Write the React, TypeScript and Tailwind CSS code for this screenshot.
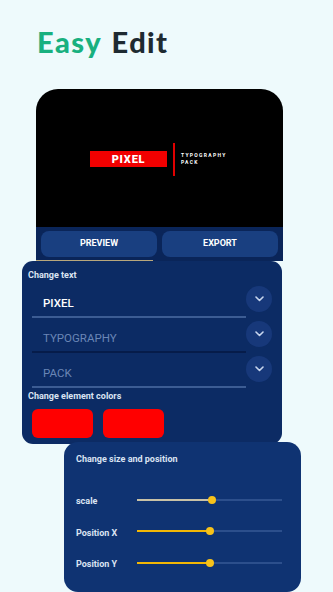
import React from 'react';

type TextRow = { value: string; active: boolean; line: string };

const rows: TextRow[] = [
  { value: 'PIXEL', active: true, line: 'bg-[#3c5c93]' },
  { value: 'TYPOGRAPHY', active: false, line: 'bg-[#061c4a]' },
  { value: 'PACK', active: false, line: 'bg-[#3c5c93]' },
];

const sliders = [
  { label: 'scale', pct: 50, fill: 'bg-[#c9c2a6]' },
  { label: 'Position X', pct: 49, fill: 'bg-[#f2b705]' },
  { label: 'Position Y', pct: 49, fill: 'bg-[#f2b705]' },
];

const Chevron: React.FC = () => (
  <div className="w-[26px] h-[26px] rounded-full bg-[#17387a] flex items-center justify-center">
    <svg width="9" height="6" viewBox="0 0 9 6" fill="none">
      <path d="M1 1l3.5 3.5L8 1" stroke="#c9d6ee" strokeWidth="1.6" strokeLinecap="round" strokeLinejoin="round" />
    </svg>
  </div>
);

const App: React.FC = () => {
  return (
    <div
      className="w-[333px] h-[592px] overflow-hidden bg-[#eefafc]"
      style={{ fontFamily: 'Roboto, "Noto Sans", sans-serif' }}
    >
      {/* Heading */}
      <h1
        className="pl-[37px] pt-[24px] h-[89px] text-[29px] leading-[36px] font-black tracking-[1.4px] [word-spacing:2px]"
        style={{ fontFamily: 'Lato, "Open Sans", sans-serif' }}
      >
        <span className="text-[#18b07f]">Easy</span>{' '}
        <span className="text-[#1e2a31]">Edit</span>
      </h1>

      {/* Phone mockup */}
      <div className="ml-[36px] w-[247px] h-[172px] rounded-t-[22px] bg-black overflow-hidden flex flex-col">
        <div className="h-[138px] flex items-center justify-center pl-[16px] pt-[2px]">
          <div className="w-[77px] h-[16px] bg-[#f10000] flex items-center justify-center">
            <span className="text-white text-[11px] font-black tracking-[0.8px] leading-none">PIXEL</span>
          </div>
          <div className="w-[2px] h-[33px] bg-[#e00000] ml-[6px]" />
          <div className="ml-[6px] w-[64px] flex flex-col text-white text-[5px] font-bold tracking-[1.3px] leading-[7px]">
            <span>TYPOGRAPHY</span>
            <span>PACK</span>
          </div>
        </div>
        <div className="flex-1 bg-[#0a2559] flex flex-col">
          <div className="flex gap-[5px] px-[5px] pt-[4px]">
            <div className="flex-1 h-[26px] rounded-[8px] bg-[#193f80] flex items-center justify-center text-white text-[9px] font-bold">
              PREVIEW
            </div>
            <div className="flex-1 h-[26px] rounded-[8px] bg-[#193f80] flex items-center justify-center text-white text-[9px] font-bold">
              EXPORT
            </div>
          </div>
          <div className="mt-auto ml-[-1px] w-[118px] h-[1px] bg-[#b9a77c]" />
        </div>
      </div>

      {/* Change text panel */}
      <div className="relative ml-[22px] w-[260px] rounded-[11px] bg-[#0c2b64] pt-[8px] pb-[6px]">
        <p className="pl-[6px] text-[9px] leading-[12px] font-bold text-[#dbe4f2]">Change text</p>
        <div className="mt-[2px]">
          {rows.map((r) => (
            <div key={r.value} className="flex h-[35px]">
              <div className="ml-[10px] w-[214px] flex flex-col justify-end">
                <span
                  className={`pl-[11px] text-[11.5px] leading-[16px] ${
                    r.active ? 'text-white font-medium' : 'text-[#6a86b6]'
                  }`}
                >
                  {r.value}
                </span>
                <div className={`mt-[5px] h-[2px] ${r.line}`} />
              </div>
              <div className="pt-[3px]">
                <Chevron />
              </div>
            </div>
          ))}
        </div>
        <p className="pl-[6px] mt-[2px] text-[9px] leading-[12px] font-bold text-[#dbe4f2]">Change element colors</p>
        <div className="flex gap-[10px] pl-[10px] mt-[7px]">
          <div className="w-[61px] h-[29px] rounded-[6px] bg-[#ff0000]" />
          <div className="w-[61px] h-[29px] rounded-[6px] bg-[#ff0000]" />
        </div>
      </div>

      {/* Size and position panel */}
      <div className="relative -mt-[2px] ml-[64px] w-[237px] h-[150px] rounded-[14px] bg-[#0f3372] pt-[11px] pl-[12px] pr-[19px]">
        <p className="text-[9px] leading-[12px] font-bold text-[#dbe4f2]">Change size and position</p>
        <div className="mt-[19px] flex flex-col">
          {sliders.map((s) => (
            <div key={s.label} className="flex items-center h-[31.5px]">
              <span className="w-[61px] text-[9px] font-bold text-[#dbe4f2] pt-[4px]">{s.label}</span>
              <div className="flex-1 flex items-center">
                <div className={`h-[2px] ${s.fill}`} style={{ width: `${s.pct}%` }} />
                <div className="w-[8px] h-[8px] rounded-full bg-[#f7c21a] shrink-0 -mx-[2px] relative" />
                <div className="flex-1 h-[2px] bg-[#2c4f8c]" />
              </div>
            </div>
          ))}
        </div>
      </div>
    </div>
  );
};

export default App;
